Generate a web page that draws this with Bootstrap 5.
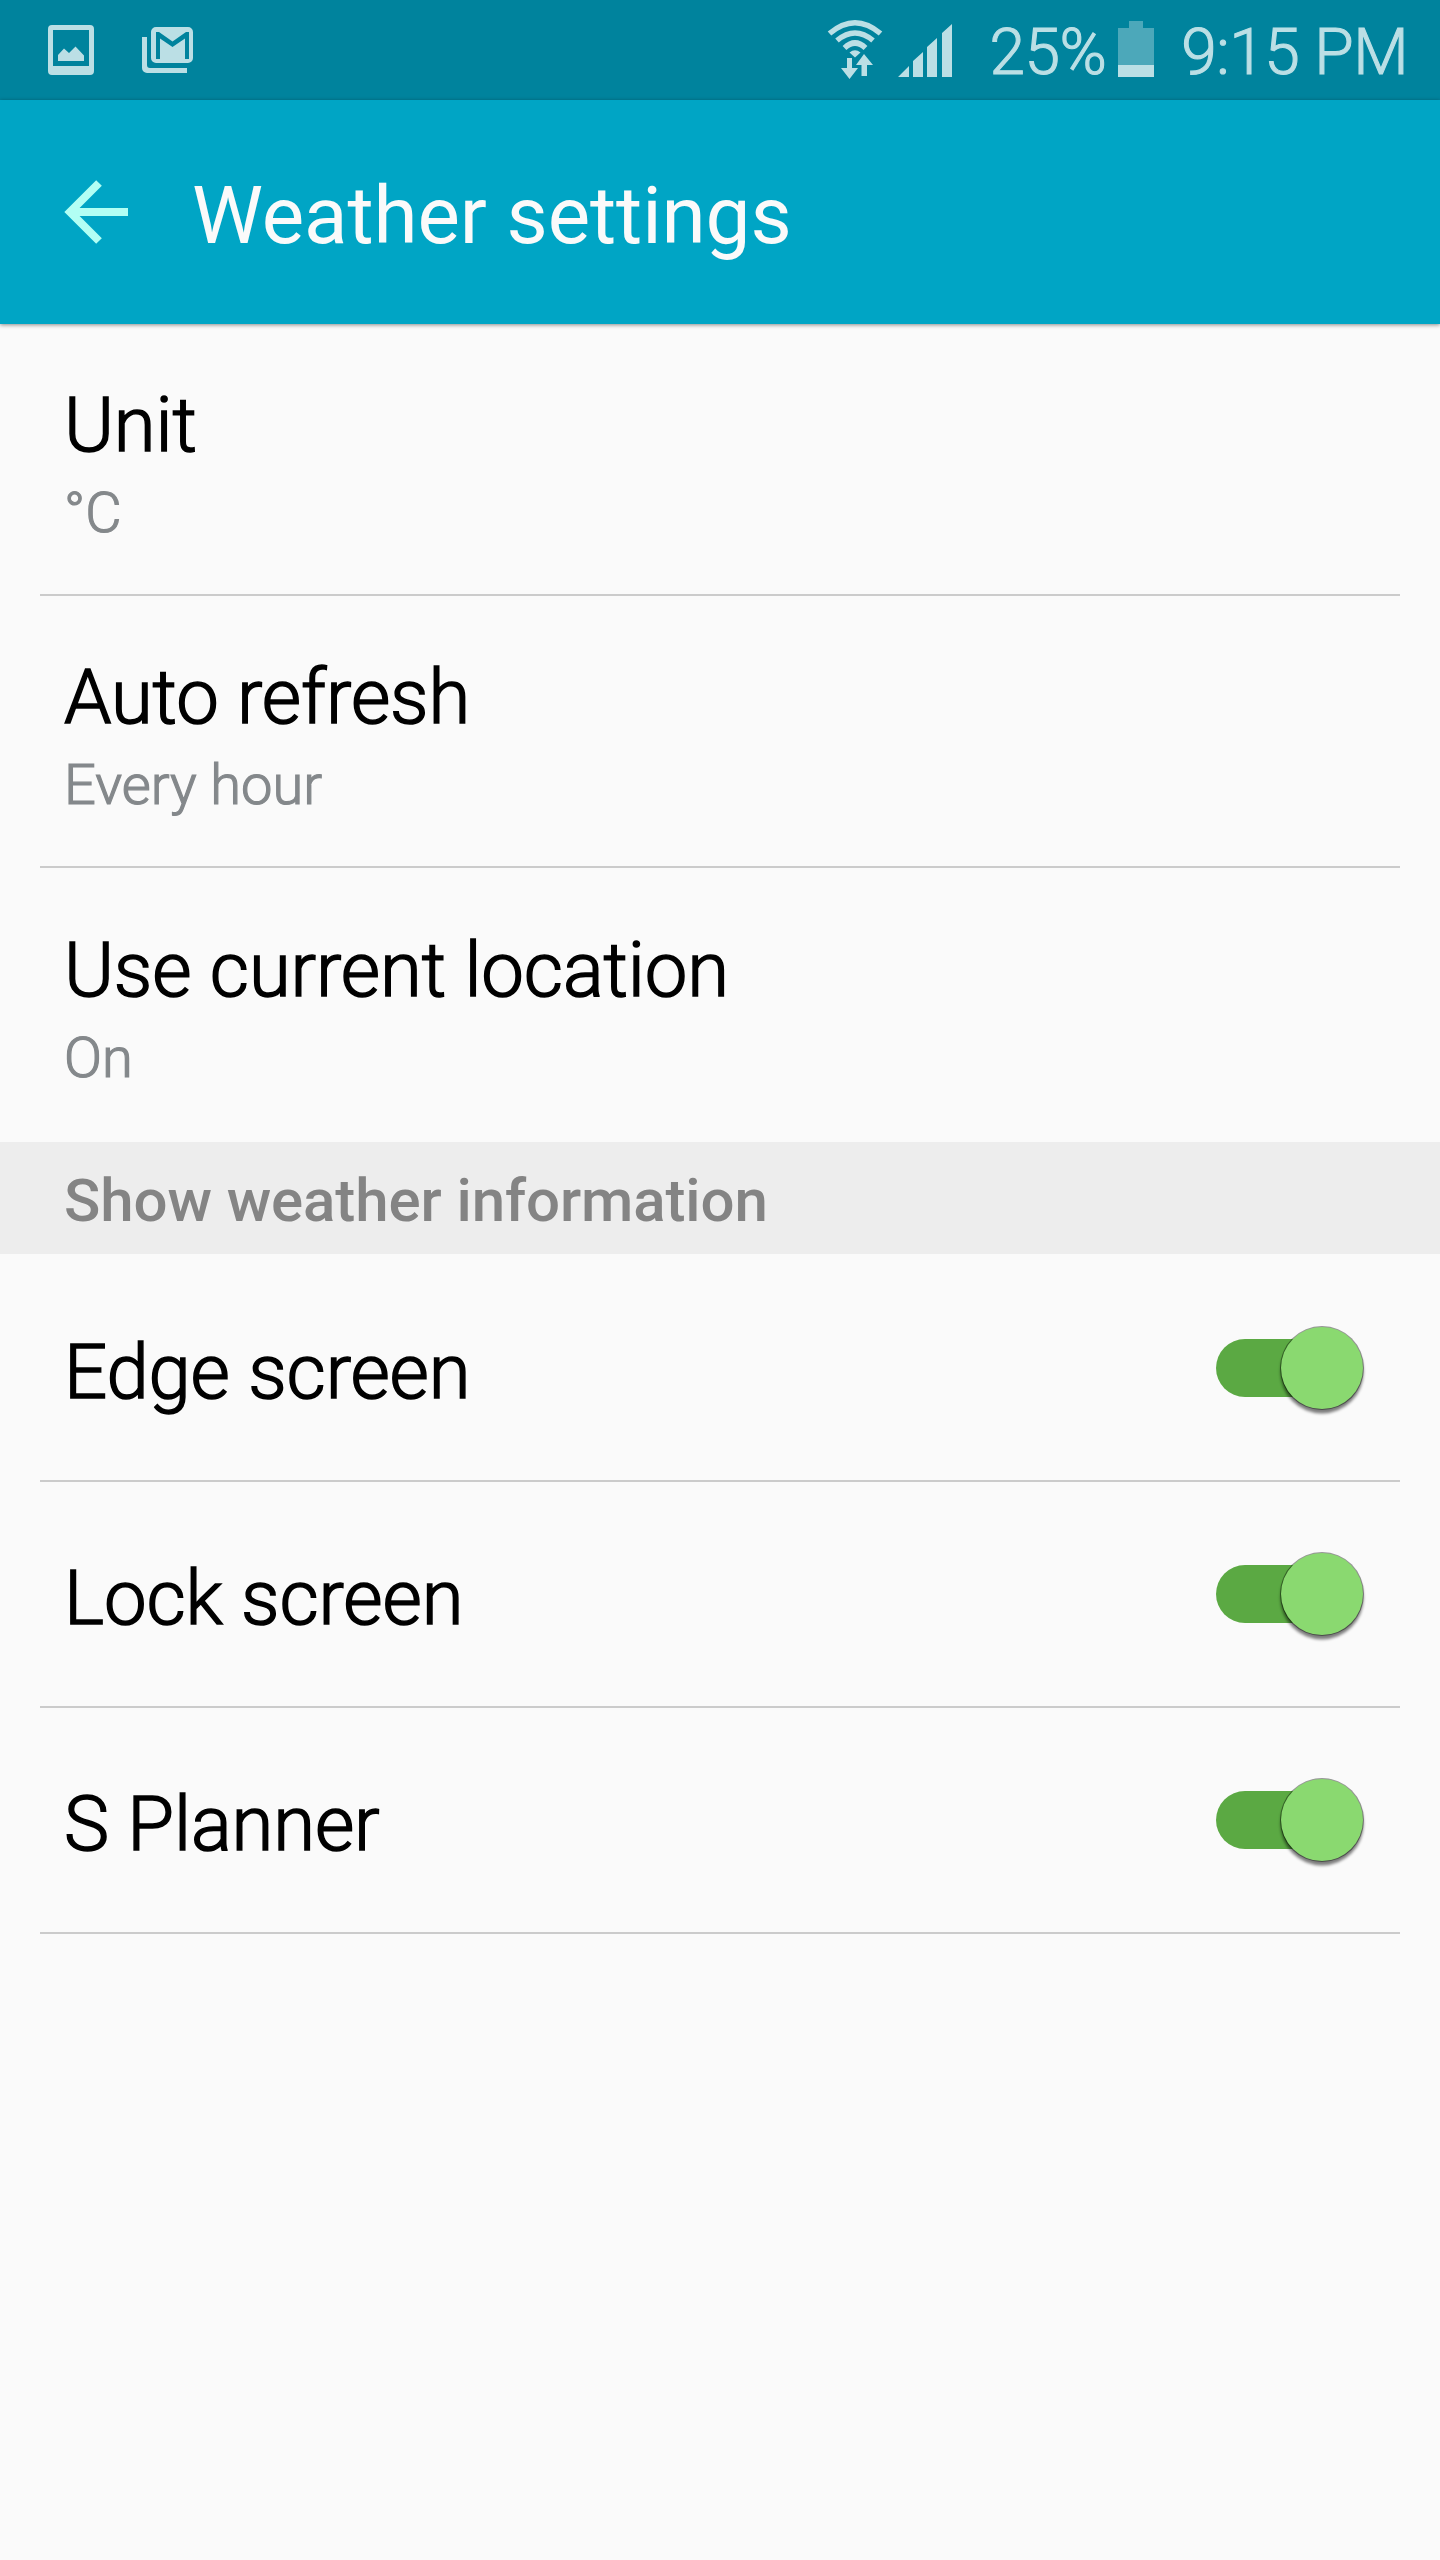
<!DOCTYPE html>
<html lang="en">
<head>
<meta charset="utf-8">
<meta name="viewport" content="width=device-width, initial-scale=1">
<title>Weather settings</title>
<link href="https://cdn.jsdelivr.net/npm/bootstrap@5.3.0/dist/css/bootstrap.min.css" rel="stylesheet">
<style>
body{font-family:Roboto,"Liberation Sans",sans-serif;background:#fafafa;color:#000;min-height:2560px}
svg{display:block;flex:none}
.status-bar{height:100px;background:#00839d;color:#bbdfe5;font-size:64px;line-height:76px;font-weight:300;letter-spacing:-.5px;padding:0 32px 0 48px}
.status-bar .status-text{padding-top:15px;white-space:pre;-webkit-text-stroke:1.1px #bbdfe5}
.app-bar{height:224px;background:#00a5c5;padding:0 64px;box-shadow:0 1px 4px rgba(0,0,0,.45);position:relative}
.app-bar h1{font-size:80px;line-height:96px;font-weight:400;color:#fafafa;letter-spacing:-.1px;margin:0 0 0 64px;padding-top:8px}
.setting{margin:0 40px;padding:0 35px 0 24px;border-bottom:2px solid #cbcbcb}
.two-line{height:272px;padding-top:56px}
.two-line.final{height:274px;padding-top:57px;border-color:transparent}
.one-line{height:226px}
.one-line.first{height:228px;padding-top:2px}
.one-line .label{padding-top:7px}
.label{font-size:76px;line-height:90px;font-weight:300;color:#000;letter-spacing:-.12px;-webkit-text-stroke:1.5px #000}
.value{font-size:56px;line-height:66px;font-weight:300;color:#84888b;margin-top:10px;-webkit-text-stroke:1.2px #84888b}
.section-title{height:112px;background:#ededed;color:#848484;font-size:60px;line-height:70px;font-weight:500;letter-spacing:-.1px;padding:5px 64px 0;margin:0}
.toggle{width:149px;height:90px;overflow:visible}
</style>
<script src="https://cdn.jsdelivr.net/npm/bootstrap@5.3.0/dist/js/bootstrap.bundle.min.js"></script>
</head>
<body>
<header>
<div class="status-bar d-flex justify-content-between align-items-start">
  <div class="d-flex">
    <svg width="46" height="100" viewBox="48 0 46 100"><path fill="#bbdfe5" fill-rule="evenodd" d="M52 25h38a4 4 0 0 1 4 4v42a4 4 0 0 1-4 4H52a4 4 0 0 1-4-4V29a4 4 0 0 1 4-4zm1 5v36h36V30zM58 61v-6l6-6.500 5 4.500 6.500-6.500 8.500 9V61z"/></svg>
    <svg width="100" height="100" viewBox="94 0 100 100"><path fill="#bbdfe5" fill-rule="evenodd" d="M156 27h32a5 5 0 0 1 5 5v26a5 5 0 0 1-5 5h-32a5 5 0 0 1-5-5V32a5 5 0 0 1 5-5zM156 32v27h4V38.500l12.500 8.500L185 38.500V59h4V32h-3l-13.500 9.500L159 32zM142 37h5v28a3 3 0 0 0 3 3h37v5h-40a5 5 0 0 1-5-5z"/></svg>
  </div>
  <div class="d-flex">
    <svg width="162" height="100" viewBox="827 0 162 100"><g fill="none" stroke="#bbdfe5" stroke-width="5.500"><path d="M829.500 33.500Q855 12 880.500 33.500M837 40.500Q855 25.500 873 40.500M844.500 48Q855 38 865.500 48"/></g><path fill="#bbdfe5" d="M849.500 52.500q5.500-4.500 11 0l-5.500 5zM847 58h5v10h6l-8.500 11L841 68h6zM861.500 76V65h-5.500l8-11 9 11h-6v11zM898 77l11-11v11zM913 77V61l10-9v25zM927 77V47l10-9v39zM942 77V33l10-9v53z"/></svg>
    <div class="status-text">25%</div>
    <svg width="75" height="100" viewBox="1105 0 75 100"><path fill="#4ca8ba" d="M1117 65V28h11v-7h14v7h11v37z"/><path fill="#bbdfe5" d="M1117 65h36v12h-36z"/></svg>
    <div class="status-text">9:15 PM</div>
  </div>
</div>
<div class="app-bar d-flex align-items-center">
  <svg width="64" height="66" viewBox="0 0 64 66"><path fill="none" stroke="#b2fff4" stroke-width="8" d="M35 4L6 33l29 29M6 33H64"/></svg>
  <h1>Weather settings</h1>
</div>
</header>
<main>
  <div class="setting two-line"><div class="label">Unit</div><div class="value">°C</div></div>
  <div class="setting two-line"><div class="label">Auto refresh</div><div class="value">Every hour</div></div>
  <div class="setting two-line final"><div class="label">Use current location</div><div class="value">On</div></div>
  <h2 class="section-title d-flex align-items-center">Show weather information</h2>
  <div class="setting one-line first d-flex align-items-center justify-content-between"><div class="label">Edge screen</div><svg class="toggle" viewBox="0 0 149 90"><use href="#sw"/></svg></div>
  <div class="setting one-line d-flex align-items-center justify-content-between"><div class="label">Lock screen</div><svg class="toggle" viewBox="0 0 149 90"><use href="#sw"/></svg></div>
  <div class="setting one-line d-flex align-items-center justify-content-between"><div class="label">S Planner</div><svg class="toggle" viewBox="0 0 149 90"><use href="#sw"/></svg></div>
</main>
<svg width="0" height="0"><defs>
<filter id="soft" x="-20%" y="-20%" width="140%" height="140%"><feGaussianBlur stdDeviation="1.500"/></filter>
<g id="sw"><rect x="0" y="16" width="120" height="58" rx="29" fill="#5ba943"/><circle cx="106" cy="49" r="41.500" fill="#000" opacity=".5" filter="url(#soft)"/><circle cx="106" cy="45" r="42" fill="#000" opacity=".4"/><circle cx="106" cy="45" r="41" fill="#8ad970"/></g>
</defs></svg>
</body>
</html>
